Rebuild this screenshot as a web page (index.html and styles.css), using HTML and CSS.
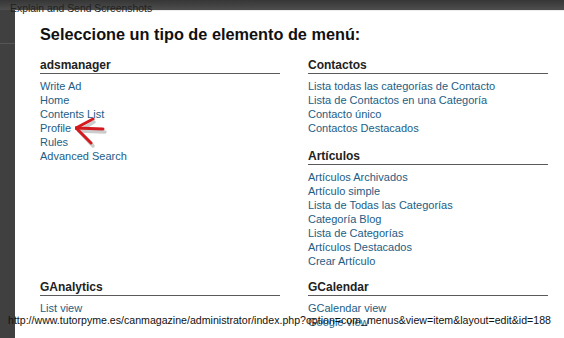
FILE: index.html
```html
<!DOCTYPE html>
<html lang="es">
<head>
    <meta charset="UTF-8">
    <title>Explain and Send Screenshots</title>
    <link rel="stylesheet" href="styles.css">
</head>
<body>
    <div class="topbar"></div>
    <div class="side-line"></div>

    <div class="modal">
        <h1>Seleccione un tipo de elemento de menú:</h1>
        <div class="groups">
            <div class="group-col">
                <div class="group">
                    <h2>adsmanager</h2>
                    <ul>
                        <li><a href="#">Write Ad</a></li>
                        <li><a href="#">Home</a></li>
                        <li><a href="#">Contents List</a></li>
                        <li><a href="#">Profile</a></li>
                        <li><a href="#">Rules</a></li>
                        <li><a href="#">Advanced Search</a></li>
                    </ul>
                </div>
            </div>
            <div class="group-col">
                <div class="group">
                    <h2>Contactos</h2>
                    <ul>
                        <li><a href="#">Lista todas las categorías de Contacto</a></li>
                        <li><a href="#">Lista de Contactos en una Categoría</a></li>
                        <li><a href="#">Contacto único</a></li>
                        <li><a href="#">Contactos Destacados</a></li>
                    </ul>
                </div>
                <div class="group">
                    <h2>Artículos</h2>
                    <ul>
                        <li><a href="#">Artículos Archivados</a></li>
                        <li><a href="#">Artículo simple</a></li>
                        <li><a href="#">Lista de Todas las Categorías</a></li>
                        <li><a href="#">Categoría Blog</a></li>
                        <li><a href="#">Lista de Categorías</a></li>
                        <li><a href="#">Artículos Destacados</a></li>
                        <li><a href="#">Crear Artículo</a></li>
                    </ul>
                </div>
            </div>
            <div class="group-col">
                <div class="group">
                    <h2>GAnalytics</h2>
                    <ul>
                        <li><a href="#">List view</a></li>
                    </ul>
                </div>
            </div>
            <div class="group-col">
                <div class="group">
                    <h2>GCalendar</h2>
                    <ul>
                        <li><a href="#">GCalendar view</a></li>
                        <li><a href="#">Google view</a></li>
                    </ul>
                </div>
            </div>
        </div>

        <!-- flecha roja sobre "Profile" -->
        <svg class="arrow" width="40" height="34" viewBox="0 0 40 34">
            <g fill="none" stroke="#9a9a9a" stroke-width="3.4" stroke-linecap="round" opacity="0.5">
                <path d="M4 14 L30 15"/>
                <path d="M4 14 L19 5"/>
                <path d="M4 14 L18 29"/>
            </g>
            <g fill="none" stroke="#d41a1f" stroke-width="3" stroke-linecap="round">
                <path d="M1 11 L28 12"/>
                <path d="M1 11 L18 2"/>
                <path d="M1 11 L16 26"/>
            </g>
        </svg>
    </div>

    <span class="window-title">Explain and Send Screenshots</span>
    <span class="statusbar">http://www.tutorpyme.es/canmagazine/administrator/index.php?option=com_menus&amp;view=item&amp;layout=edit&amp;id=188</span>
</body>
</html>
```

FILE: styles.css
```css
html, body { margin: 0; padding: 0; }
body { width: 564px; height: 338px; overflow: hidden; background-color: #404040; font-family: "Liberation Sans", Arial, sans-serif; position: relative; }
.topbar { height: 10px; background: linear-gradient(#363636, #4e4e4e); }
.side-line { height: 1px; margin-top: 33px; width: 15px; background-color: #565656; }

.modal { position: absolute; left: 15px; top: 10px; right: -10px; bottom: -10px; background-color: #fff; border-top: 1px solid #ececec; padding: 14px 0 0 25px; box-sizing: border-box; }
.modal h1 { margin: 0 0 15px 0; font-size: 16.3px; line-height: 18px; font-weight: bold; color: #111; }

.groups { display: grid; grid-template-columns: 240px 240px; column-gap: 28px; row-gap: 12px; }
.group { margin-bottom: 14px; }
.group:last-child { margin-bottom: 0; }
.group h2 { margin: 0 0 5px 0; font-size: 12px; line-height: 14px; font-weight: bold; color: #222; padding-bottom: 1px; border-bottom: 1px solid #5a5a5a; }
.group ul { list-style: none; margin: 0; padding: 0; }
.group li { font-size: 11px; line-height: 14px; }
.group a { color: #235d84; text-decoration: none; }

.arrow { position: absolute; left: 60px; top: 106px; }

.window-title { position: absolute; left: 10px; top: 3px; font-size: 10.4px; line-height: 12px; color: #222; }
.statusbar { position: absolute; left: 8px; top: 314px; font-size: 10.6px; line-height: 13px; color: #111; white-space: nowrap; }
```
